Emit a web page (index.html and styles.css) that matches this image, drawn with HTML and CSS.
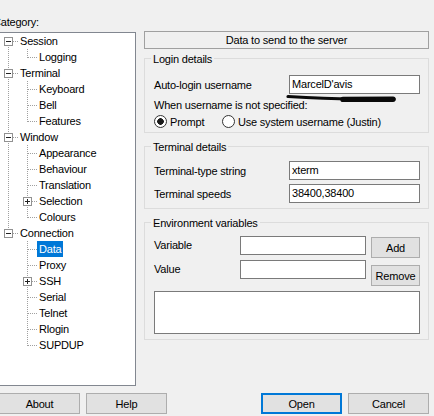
FILE: index.html
```html
<!DOCTYPE html>
<html>
<head>
<meta charset="utf-8">
<link rel="stylesheet" href="styles.css">
</head>
<body>
<div class="dialog">
  <div class="main">
    <div class="left">
      <div class="cat-label">Category:</div>
      <div class="tree">
        <div class="row"><span class="c f"><span class="bx"></span></span><span class="tl">Session</span></div>
        <div class="row"><span class="c v"></span><span class="c l"></span><span class="tl">Logging</span></div>
        <div class="row"><span class="c t"><span class="bx"></span></span><span class="tl">Terminal</span></div>
        <div class="row"><span class="c v"></span><span class="c t"></span><span class="tl">Keyboard</span></div>
        <div class="row"><span class="c v"></span><span class="c t"></span><span class="tl">Bell</span></div>
        <div class="row"><span class="c v"></span><span class="c l"></span><span class="tl">Features</span></div>
        <div class="row"><span class="c t"><span class="bx"></span></span><span class="tl">Window</span></div>
        <div class="row"><span class="c v"></span><span class="c t"></span><span class="tl">Appearance</span></div>
        <div class="row"><span class="c v"></span><span class="c t"></span><span class="tl">Behaviour</span></div>
        <div class="row"><span class="c v"></span><span class="c t"></span><span class="tl">Translation</span></div>
        <div class="row"><span class="c v"></span><span class="c t"><span class="bx plus"></span></span><span class="tl">Selection</span></div>
        <div class="row"><span class="c v"></span><span class="c l"></span><span class="tl">Colours</span></div>
        <div class="row"><span class="c l"><span class="bx"></span></span><span class="tl">Connection</span></div>
        <div class="row"><span class="c"></span><span class="c t"></span><span class="tl sel">Data</span></div>
        <div class="row"><span class="c"></span><span class="c t"></span><span class="tl">Proxy</span></div>
        <div class="row"><span class="c"></span><span class="c t"><span class="bx plus"></span></span><span class="tl">SSH</span></div>
        <div class="row"><span class="c"></span><span class="c t"></span><span class="tl">Serial</span></div>
        <div class="row"><span class="c"></span><span class="c t"></span><span class="tl">Telnet</span></div>
        <div class="row"><span class="c"></span><span class="c t"></span><span class="tl">Rlogin</span></div>
        <div class="row"><span class="c"></span><span class="c l"></span><span class="tl">SUPDUP</span></div>
      </div>
    </div>
    <div class="right">
      <div class="panel-title">Data to send to the server</div>

      <div class="group login">
        <div class="group-title">Login details</div>
        <div class="frow first-login"><span class="flbl">Auto-login username</span><span class="input">MarcelD'avis</span></div>
        <div class="when">When username is not specified:</div>
        <div class="radios">
          <span class="ropt w1"><span class="radio on"></span><span>Prompt</span></span>
          <span class="ropt"><span class="radio"></span><span>Use system username (Justin)</span></span>
        </div>
        <svg class="scribble" width="114" height="10" viewBox="0 0 114 10">
          <path d="M3 2.5 Q 40 4.5 70 5 T 109 5" fill="none" stroke="#0a0a0a" stroke-width="3.2" stroke-linecap="round"/>
          <path d="M58 5.4 L108 5.2" fill="none" stroke="#0a0a0a" stroke-width="5.4" stroke-linecap="round"/>
        </svg>
      </div>

      <div class="group term">
        <div class="group-title">Terminal details</div>
        <div class="frow r1"><span class="flbl">Terminal-type string</span><span class="input">xterm</span></div>
        <div class="frow r2"><span class="flbl">Terminal speeds</span><span class="input">38400,38400</span></div>
      </div>

      <div class="group env">
        <div class="group-title">Environment variables</div>
        <div class="erow e1"><span class="elbl">Variable</span><span class="input ein"></span><span class="btn ebtn b-add">Add</span></div>
        <div class="erow e2"><span class="elbl">Value</span><span class="input ein"></span><span class="btn ebtn b-rem">Remove</span></div>
        <div class="listbox"></div>
      </div>
    </div>
  </div>
  <div class="footer">
    <div class="fgroup">
      <span class="btn fbtn">About</span>
      <span class="btn fbtn">Help</span>
    </div>
    <div class="fgroup">
      <span class="btn fbtn default">Open</span>
      <span class="btn fbtn">Cancel</span>
    </div>
  </div>
</div>
</body>
</html>
```

FILE: styles.css
```css
* { box-sizing: border-box; }

html, body {
  margin: 0;
  padding: 0;
  background: #f0f0f0;
}

body {
  width: 434px;
  height: 416px;
  overflow: hidden;
  font-family: "Liberation Sans", Arial, sans-serif;
  font-size: 11px;
  letter-spacing: -0.2px;
  color: #000;
}

.dialog {
  margin-left: -7px;
  width: 441px;
  padding-top: 16px;
  --v: repeating-linear-gradient(#a0a0a0 0 1px, transparent 1px 2px);
  --h: repeating-linear-gradient(90deg, #a0a0a0 0 1px, transparent 1px 2px);
}

.main {
  display: flex;
  gap: 8px;
}

/* ---------- left: category tree ---------- */
.left {
  width: 143px;
  flex: none;
}

.cat-label {
  height: 13px;
  line-height: 13px;
}

.tree {
  margin-top: 3px;
  height: 354px;
  border: 1px solid #828790;
  background: #fff;
  padding-left: 5px;
}

.row {
  display: flex;
  height: 16px;
}

.c {
  width: 19px;
  height: 16px;
  flex: none;
  display: flex;
  align-items: flex-start;
}

.c.v { background: var(--v) 9px 0 / 1px 16px no-repeat; }
.c.t { background: var(--v) 9px 0 / 1px 16px no-repeat, var(--h) 10px 8px / 9px 1px no-repeat; }
.c.f { background: var(--v) 9px 8px / 1px 8px no-repeat, var(--h) 10px 8px / 9px 1px no-repeat; }
.c.l { background: var(--v) 9px 0 / 1px 9px no-repeat, var(--h) 10px 8px / 9px 1px no-repeat; }

.bx {
  width: 9px;
  height: 9px;
  margin: 4px 0 0 5px;
  border: 1px solid #919191;
  background: linear-gradient(#222, #222) 1px 3px / 5px 1px no-repeat, #fff;
}

.bx.plus {
  background:
    linear-gradient(#222, #222) 1px 3px / 5px 1px no-repeat,
    linear-gradient(#222, #222) 3px 1px / 1px 5px no-repeat,
    #fff;
}

.tl {
  height: 16px;
  line-height: 16px;
  padding: 0 2px;
  white-space: nowrap;
}

.tl.sel {
  background: #0078d7;
  color: #fff;
}

/* ---------- right panel ---------- */
.right {
  width: 285px;
  flex: none;
  margin-top: 15px;
}

.panel-title {
  height: 18px;
  line-height: 16px;
  border: 1px solid #a0a0a0;
  background: #f0f0f0;
  text-align: center;
}

.group {
  position: relative;
  border: 1px solid #dcdcdc;
  padding: 0 8px 0 9px;
}

.group-title {
  width: fit-content;
  height: 13px;
  line-height: 13px;
  margin: -6px 0 0 -3px;
  padding: 0 2px;
  background: #f0f0f0;
}

.login {
  margin-top: 9px;
  padding-bottom: 4px;
}

.term {
  margin-top: 13px;
  padding-bottom: 5px;
}

.env {
  margin-top: 13px;
  padding-bottom: 5px;
}

.frow {
  display: flex;
  align-items: center;
  height: 19px;
}

.flbl {
  width: 135px;
  flex: none;
}

.input {
  display: block;
  width: 131px;
  height: 19px;
  border: 1px solid #7a7a7a;
  background: #fff;
  padding-left: 2px;
  line-height: 17px;
  white-space: nowrap;
}

.first-login { margin-top: 9px; }

.when {
  margin-top: 5px;
  height: 13px;
  line-height: 13px;
}

.radios {
  margin-top: 3px;
  height: 13px;
  display: flex;
  align-items: center;
}

.ropt {
  display: flex;
  align-items: center;
  gap: 3px;
  white-space: nowrap;
}

.ropt.w1 { width: 68px; flex: none; }

.radio {
  width: 13px;
  height: 13px;
  flex: none;
  border: 1px solid #333;
  border-radius: 50%;
  background: #fff;
}

.radio.on {
  background: radial-gradient(circle, #1a1a1a 0 3px, #fff 3.6px);
}

.scribble {
  position: absolute;
  left: 140px;
  top: 35px;
}

.term .r1 { margin-top: 7px; }
.term .r2 { margin-top: 4px; }

.erow {
  display: flex;
  align-items: flex-start;
}

.e1 { margin-top: 6px; }
.e2 { margin-top: 2px; }

.elbl {
  width: 86px;
  flex: none;
  height: 19px;
  line-height: 19px;
}

.ein { width: 126px; }

.btn {
  display: flex;
  align-items: center;
  justify-content: center;
  border: 1px solid #adadad;
  background: #e1e1e1;
  white-space: nowrap;
}

.ebtn {
  width: 49px;
  height: 21px;
  margin-left: 5px;
}

.b-add { margin-top: 1px; }
.b-rem { margin-top: 5px; }

.listbox {
  margin-top: 5px;
  width: 266px;
  height: 43px;
  border: 1px solid #7a7a7a;
  background: #fff;
}

/* ---------- footer ---------- */
.footer {
  margin-top: 7px;
  display: flex;
  justify-content: space-between;
  padding: 0 5px 0 6px;
}

.fgroup {
  display: flex;
  gap: 6px;
}

.fbtn {
  width: 81px;
  height: 21px;
}

.fbtn.default {
  border: 2px solid #0078d7;
}
```
